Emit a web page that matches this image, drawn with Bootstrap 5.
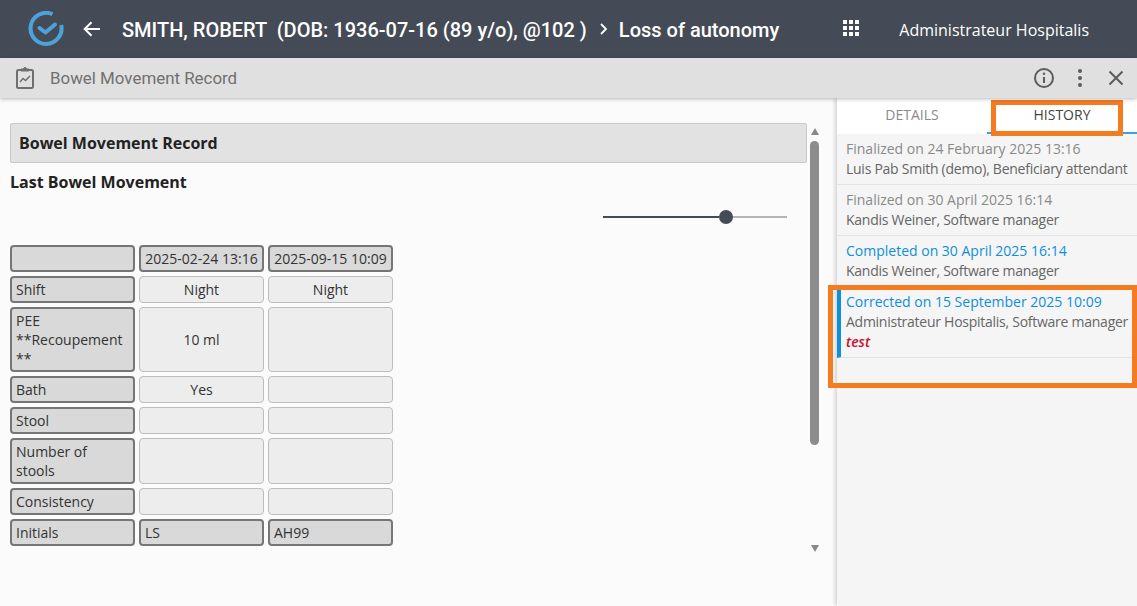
<!DOCTYPE html>
<html lang="en"><head><meta charset="utf-8"><title>Bowel Movement Record</title>
<link href="https://cdn.jsdelivr.net/npm/bootstrap@5.3.0/dist/css/bootstrap.min.css" rel="stylesheet">
<style>
html,body{height:100%;overflow:hidden}
body{font-family:"Open Sans","Liberation Sans",sans-serif;font-size:14px;line-height:19px;color:#333;background:#fbfbfb}
.app-shell{height:606px;width:1137px;position:relative;overflow:hidden}
.top-bar{height:58px;background:#444b56;color:#fff;font-family:Roboto,sans-serif}
.logo-svg{margin-left:28px;margin-right:19px}
.back-svg{margin-right:21px}
.pt-title{font-size:20px;font-weight:500;white-space:pre;margin-top:2px}
.crumb-svg{margin:0 11px 0 12px}
.apps-grid{display:grid;grid-template-columns:repeat(3,4px);gap:2px;margin-left:64px;margin-right:40px;margin-bottom:2px}
.apps-grid span{width:4px;height:4px;background:#fff}
.user-name{font-family:"Open Sans",sans-serif;font-size:16px;margin-top:2px}
.tool-bar{height:40px;background:#e0e0e0;box-shadow:0 1px 4px rgba(0,0,0,.28);position:relative;z-index:2;color:#707070;font-family:Roboto,sans-serif;font-size:16.9px;padding-left:15px;padding-right:10px}
.tool-title{margin-left:15px}
.tool-icons{gap:20px}
.main-zone{height:508px}
.left-pane{width:837px;background:#fbfbfb;padding:25px 18px 0 10px;gap:3px}
.form-col{width:797px;flex:none}
.section-head{height:40px;background:#e2e2e2;border:1px solid #c9c9c9;border-radius:2px;font-size:16px;font-weight:700;color:#222;padding-left:8px}
.sub-head{font-size:16px;font-weight:700;color:#222;margin-top:9px;line-height:20px}
.slide-wrap{width:184px;height:14px;margin:18px 20px 21px auto}
.slide-on{width:116px;height:2px;background:#444b56}
.slide-knob{width:14px;height:14px;border-radius:50%;background:#444b56;flex:none}
.slide-off{flex:1;height:2px;background:#b5b5b5}
.obs-grid{display:grid;grid-template-columns:repeat(3,125px);gap:4px}
.c-dark,.c-light{border-radius:4px}
.c-dark{background:#d9d9d9;border:2px solid #767676;padding:2px 4px}
.c-light{background:#ededed;border:1px solid #bdbdbd;padding:3px 5px;display:flex;align-items:center;justify-content:center;text-align:center}
.c-center{text-align:center;padding-left:0;padding-right:0}
.scroll-col{width:9px;flex:none}
.s-up{width:0;height:0;border-left:4.5px solid transparent;border-right:4.5px solid transparent;border-bottom:7px solid #888;margin-top:5px}
.s-thumb{width:9px;height:304px;background:#8c8c8c;border-radius:5px;margin-top:6px}
.s-down{width:0;height:0;border-left:4.5px solid transparent;border-right:4.5px solid transparent;border-top:7px solid #888;margin-top:100px}
.right-pane{width:300px;background:#f5f5f5;box-shadow:-2px 0 4px rgba(0,0,0,.16);position:relative}
.tab-row{height:36px;background:#fff}
.tab-one,.tab-two{flex:1;text-align:center;font-size:14px;padding-top:7px}
.tab-one{color:#8a8a8a}
.tab-two{color:#444;border-bottom:2px solid #3f9fd8}
.hist-item{padding:5px 5px 5px 9px;border-bottom:1px solid #e2e2e2;line-height:20px;font-size:14px;letter-spacing:-.26px;color:#666;white-space:nowrap}
.hist-grey,.hist-blue,.hist-note{letter-spacing:0}
.hist-grey{color:#8a8a8a}
.hist-blue{color:#0d8fdb}
.hist-on{border-left:4px solid #0d8fdb;padding-left:5px}
.hist-note{color:#c8102e;font-style:italic;font-weight:600}
.mark-box{position:absolute;border:5px solid #f47b20;pointer-events:none}
.mark-a{left:154px;top:2px;width:132px;height:36px}
.mark-b{left:-9px;top:187px;width:309px;height:103px}
</style></head>
<body>
<div class="app-shell d-flex flex-column">
  <header class="top-bar d-flex align-items-center">
    <svg class="logo-svg" width="36" height="36" viewBox="0 0 36 36" fill="none" stroke="#4ba3d9" stroke-width="4"><path d="M24.500 3.300A15.500 15.500 0 1 0 33.200 14"/><path d="M11.500 17l6 4.500 9.500-8" stroke-linecap="round" stroke-linejoin="round"/></svg>
    <svg class="back-svg" width="18" height="16" viewBox="0 0 18 16" fill="none" stroke="#fff" stroke-width="2"><path d="M17 8H2M8.500 1.200 1.700 8l6.800 6.800"/></svg>
    <span class="pt-title">SMITH, ROBERT  (DOB: 1936-07-16 (89 y/o), @102 )</span>
    <svg class="crumb-svg" width="9" height="14" viewBox="0 0 9 14" fill="none" stroke="#fff" stroke-width="1.800"><path d="M2 2l5 5-5 5"/></svg>
    <span class="pt-title">Loss of autonomy</span>
    <div class="apps-grid"><span></span><span></span><span></span><span></span><span></span><span></span><span></span><span></span><span></span></div>
    <span class="user-name">Administrateur Hospitalis</span>
  </header>
  <div class="tool-bar d-flex align-items-center">
    <svg width="20" height="24" viewBox="0 0 20 24" fill="none" stroke="#707070" stroke-width="2"><rect x="2" y="4" width="16" height="18" rx="1.500"/><path d="M6 5V3h2.500a1.500 1.500 0 0 1 3 0H14v2z" fill="#707070" stroke-width="1"/><path d="M5 16l3-3.500 2.500 2L15 10" stroke-width="1.500"/></svg>
    <span class="tool-title">Bowel Movement Record</span>
    <div class="tool-icons d-flex align-items-center ms-auto">
      <svg width="22" height="22" viewBox="0 0 22 22" fill="none" stroke="#5c5c5c" stroke-width="2"><circle cx="11" cy="11" r="9"/><path d="M11 10v6"/><circle cx="11" cy="6.800" r="1.200" fill="#5c5c5c" stroke="none"/></svg>
      <svg width="10" height="18" viewBox="0 0 10 18" fill="#5c5c5c"><circle cx="5" cy="2" r="2"/><circle cx="5" cy="9" r="2"/><circle cx="5" cy="16" r="2"/></svg>
      <svg width="22" height="16" viewBox="0 0 22 16" fill="none" stroke="#5c5c5c" stroke-width="2"><path d="M4.500 1.500l13 13M17.500 1.500l-13 13"/></svg>
    </div>
  </div>
  <div class="main-zone d-flex">
    <div class="left-pane d-flex">
      <div class="form-col">
        <div class="section-head d-flex align-items-center">Bowel Movement Record</div>
        <div class="sub-head">Last Bowel Movement</div>
        <div class="slide-wrap d-flex align-items-center"><div class="slide-on"></div><div class="slide-knob"></div><div class="slide-off"></div></div>
        <div class="obs-grid">
          <div class="c-dark"></div><div class="c-dark c-center">2025-02-24 13:16</div><div class="c-dark c-center">2025-09-15 10:09</div>
          <div class="c-dark">Shift</div><div class="c-light">Night</div><div class="c-light">Night</div>
          <div class="c-dark">PEE<br>**Recoupement<br>**</div><div class="c-light">10 ml</div><div class="c-light"></div>
          <div class="c-dark">Bath</div><div class="c-light">Yes</div><div class="c-light"></div>
          <div class="c-dark">Stool</div><div class="c-light"></div><div class="c-light"></div>
          <div class="c-dark">Number of<br>stools</div><div class="c-light"></div><div class="c-light"></div>
          <div class="c-dark">Consistency</div><div class="c-light"></div><div class="c-light"></div>
          <div class="c-dark">Initials</div><div class="c-dark">LS</div><div class="c-dark">AH99</div>
        </div>
      </div>
      <div class="scroll-col d-flex flex-column align-items-center">
        <div class="s-up"></div><div class="s-thumb"></div><div class="s-down"></div>
      </div>
    </div>
    <aside class="right-pane">
      <div class="tab-row d-flex"><div class="tab-one">DETAILS</div><div class="tab-two">HISTORY</div></div>
      <div class="hist-item"><div class="hist-grey">Finalized on 24 February 2025 13:16</div>Luis Pab Smith (demo), Beneficiary attendant</div>
      <div class="hist-item"><div class="hist-grey">Finalized on 30 April 2025 16:14</div>Kandis Weiner, Software manager</div>
      <div class="hist-item"><div class="hist-blue">Completed on 30 April 2025 16:14</div>Kandis Weiner, Software manager</div>
      <div class="hist-item hist-on"><div class="hist-blue">Corrected on 15 September 2025 10:09</div>Administrateur Hospitalis, Software manager<div class="hist-note">test</div></div>
      <div class="mark-box mark-a"></div>
      <div class="mark-box mark-b"></div>
    </aside>
  </div>
</div>
<script src="https://cdn.jsdelivr.net/npm/bootstrap@5.3.0/dist/js/bootstrap.bundle.min.js"></script>
</body></html>
